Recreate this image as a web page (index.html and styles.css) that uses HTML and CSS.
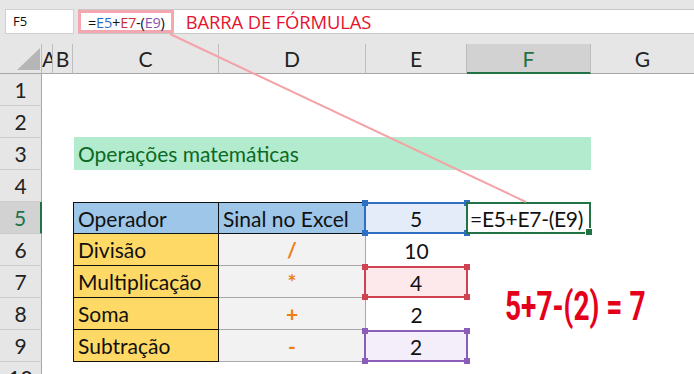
FILE: index.html
```html
<!DOCTYPE html>
<html>

<head>
    <meta charset="utf-8">
    <meta name="viewport" content="width=device-width, initial-scale=1.0">
    <title>Operações matemáticas</title>
    <link rel="stylesheet" href="styles.css">
</head>

<body>
    <div class="app">
        <header class="formula-bar">
            <div class="name-box">F5</div>
            <div class="formula-input">
                <span class="formula-box">=<span class="ref-blue">E5</span>+<span class="ref-red">E7</span>-(<span class="ref-purple">E9</span>)</span>
                <span class="formula-label">BARRA DE FÓRMULAS</span>
            </div>
        </header>

        <main class="sheet">
            <!-- column headers -->
            <div class="corner">
                <svg width="42" height="30" viewBox="0 0 42 30"><polygon points="17,26 40,26 40,4" fill="#b6b6b6" /></svg>
            </div>
            <div class="colhead col-a">A</div>
            <div class="colhead col-b">B</div>
            <div class="colhead col-c">C</div>
            <div class="colhead col-d">D</div>
            <div class="colhead col-e">E</div>
            <div class="colhead col-f selected">F</div>
            <div class="colhead col-g">G</div>

            <!-- row headers -->
            <div class="rowhead r1">1</div>
            <div class="rowhead r2">2</div>
            <div class="rowhead r3">3</div>
            <div class="rowhead r4">4</div>
            <div class="rowhead r5 selected">5</div>
            <div class="rowhead r6">6</div>
            <div class="rowhead r7">7</div>
            <div class="rowhead r8">8</div>
            <div class="rowhead r9">9</div>
            <div class="rowhead r10">10</div>

            <!-- title -->
            <div class="title r3">Operações matemáticas</div>

            <!-- operators table -->
            <div class="ops">
                <div class="op head">Operador</div>
                <div class="sign head">Sinal no Excel</div>
                <div class="op">Divisão</div>
                <div class="sign">/</div>
                <div class="op">Multiplicação</div>
                <div class="sign">*</div>
                <div class="op">Soma</div>
                <div class="sign">+</div>
                <div class="op">Subtração</div>
                <div class="sign">-</div>
            </div>

            <!-- values -->
            <div class="val col-e r5 ref blue">5<span class="h tl"></span><span class="h tr"></span><span class="h bl"></span><span class="h br"></span></div>
            <div class="val col-e r6">10</div>
            <div class="val col-e r7 ref red">4<span class="h tl"></span><span class="h tr"></span><span class="h bl"></span><span class="h br"></span></div>
            <div class="val col-e r8">2</div>
            <div class="val col-e r9 ref purple">2<span class="h tl"></span><span class="h tr"></span><span class="h bl"></span><span class="h br"></span></div>

            <div class="active col-f r5">=E5+E7-(E9)<span class="fill-handle"></span></div>

            <div class="result"><span>5+7-(2) = 7</span></div>
        </main>

        <svg class="callout" width="694" height="374" viewBox="0 0 694 374">
            <line x1="170" y1="34" x2="526" y2="202" stroke="#f4a3a6" stroke-width="2" />
        </svg>
    </div>
</body>

</html>
```

FILE: styles.css
```css
/* vars */
:root {
    --head-bg: #e6e6e6;
    --head-line: #bdbdbd;
    --sel-bg: #d2d2d2;
    --excel-green: #217346;
    --cell-font: Lato, "Open Sans", sans-serif;
}

html,
body {
    margin: 0;
    height: 100%;
    overflow: hidden;
    background: #fff;
}

.app {
    position: relative;
    width: 694px;
    height: 374px;
    font-family: var(--cell-font);
    color: #111;
}

/* formula bar */
.formula-bar {
    display: flex;
    align-items: stretch;
    height: 44px;
    padding: 9px 0 10px 0;
    box-sizing: border-box;
    background: var(--head-bg);
    gap: 4px;
}

.name-box {
    width: 69px;
    margin-left: 5px;
    background: #fff;
    border: 1px solid #d0d0d0;
    box-sizing: border-box;
    font-family: "Open Sans", sans-serif;
    font-size: 13px;
    line-height: 22px;
    padding-left: 7px;
}

.formula-input {
    flex: 1;
    display: flex;
    align-items: center;
    background: #fff;
    border-top: 1px solid #c8c8c8;
    border-bottom: 1px solid #c8c8c8;
    font-family: "Open Sans", sans-serif;
}

.formula-box {
    height: 100%;
    box-sizing: border-box;
    border: 3px solid #f2a8ae;
    padding: 0 6px 0 7px;
    font-size: 14.5px;
    line-height: 19px;
    margin-top: -1px;
    letter-spacing: -0.2px;
}

.ref-blue { color: #2e6bc4; }
.ref-red { color: #c4333f; }
.ref-purple { color: #8456ae; }

.formula-label {
    margin-left: 12px;
    color: #e4142e;
    font-size: 18.4px;
    letter-spacing: -0.1px;
}

/* sheet */
.sheet {
    display: grid;
    grid-template-columns: 42px 11px 20px 146px 147px 101px 124px 1fr;
    grid-template-rows: 30px repeat(10, 32px);
    height: 330px;
    overflow: hidden;
}

.corner {
    grid-column: 1;
    grid-row: 1;
    background: var(--head-bg);
    border-right: 1px solid var(--head-line);
    border-bottom: 1px solid #a6a6a6;
    box-sizing: border-box;
}

.corner svg { display: block; }

.colhead {
    grid-row: 1;
    background: var(--head-bg);
    border-right: 1px solid var(--head-line);
    border-bottom: 1px solid #a6a6a6;
    box-sizing: border-box;
    font-size: 21px;
    line-height: 30px;
    text-align: center;
    overflow: hidden;
    color: #222;
}

.colhead.col-a { text-align: left; }
.colhead.col-g { border-right: none; }

.colhead.selected {
    background: var(--sel-bg);
    color: var(--excel-green);
    border-bottom: 2px solid var(--excel-green);
    line-height: 29px;
}

.rowhead {
    grid-column: 1;
    background: var(--head-bg);
    border-right: 1px solid #a6a6a6;
    border-bottom: 1px solid #cdcdcd;
    box-sizing: border-box;
    font-size: 21px;
    line-height: 32px;
    text-align: center;
    color: #222;
}

.rowhead.selected {
    background: var(--sel-bg);
    color: var(--excel-green);
    border-right: 2px solid var(--excel-green);
}

.col-a { grid-column: 2; }
.col-b { grid-column: 3; }
.col-c { grid-column: 4; }
.col-d { grid-column: 5; }
.col-e { grid-column: 6; }
.col-f { grid-column: 7; }
.col-g { grid-column: 8; }

.r1 { grid-row: 2; }
.r2 { grid-row: 3; }
.r3 { grid-row: 4; }
.r4 { grid-row: 5; }
.r5 { grid-row: 6; }
.r6 { grid-row: 7; }
.r7 { grid-row: 8; }
.r8 { grid-row: 9; }
.r9 { grid-row: 10; }
.r10 { grid-row: 11; }

/* title band C3:F3 */
.title {
    grid-column: 4 / 8;
    margin: -1px 0 0 1px;
    background: #b3ebcf;
    color: #0b6a24;
    font-size: 21px;
    line-height: 33px;
    padding-left: 4px;
}

/* operators table C5:D9 */
.ops {
    grid-column: 4 / 6;
    grid-row: 6 / 11;
    display: grid;
    grid-template-columns: 146px 147px;
    grid-template-rows: repeat(5, 32px);
    font-size: 21px;
}

.op,
.sign {
    box-sizing: border-box;
    display: flex;
    align-items: center;
}

.op {
    background: #ffd966;
    border: 1px solid #111;
    border-top: none;
    padding-left: 4px;
}

.sign {
    justify-content: center;
    background: #f2f2f2;
    border-bottom: 1px solid #a8a8a8;
    border-right: 1px solid #a8a8a8;
    color: #f07c14;
    font-weight: bold;
}

.op.head,
.sign.head {
    background: #9dc6e9;
    border-top: 1px solid #111;
    border-bottom: 1px solid #111;
    font-weight: normal;
    color: #111;
}

.sign.head {
    justify-content: flex-start;
    padding-left: 4px;
    border-right: 1px solid #111;
}

/* value column E */
.val {
    position: relative;
    display: flex;
    align-items: center;
    justify-content: center;
    font-size: 21px;
}

.ref {
    margin: 0 -1px 0 -2px;
    border: 2px solid;
}

.ref.blue { border-color: #2f6fc2; background: #e3ecf8; }
.ref.red { border-color: #cf4250; background: #fde9ec; }
.ref.purple { border-color: #8b5db8; background: #f3eefa; }

.h {
    position: absolute;
    width: 6px;
    height: 6px;
}

.ref.blue .h { background: #2f6fc2; }
.ref.red .h { background: #cf4250; }
.ref.purple .h { background: #8b5db8; }

.h.tl { left: -4px; top: -4px; }
.h.tr { right: -4px; top: -4px; }
.h.bl { left: -4px; bottom: -4px; }
.h.br { right: -4px; bottom: -4px; }

/* active cell F5 */
.active {
    position: relative;
    border: 2px solid var(--excel-green);
    margin: 0 0 0 -1px;
    font-size: 21px;
    display: flex;
    align-items: center;
    padding-left: 2px;
    background: #fff;
    white-space: nowrap;
    letter-spacing: -0.3px;
}

.fill-handle {
    position: absolute;
    right: -4px;
    bottom: -4px;
    width: 6px;
    height: 6px;
    background: var(--excel-green);
    border: 1px solid #fff;
}

/* result note */
.result {
    grid-column: 7 / 9;
    grid-row: 8 / 10;
    padding: 20px 0 0 38px;
}

.result span {
    display: inline-block;
    font-family: Roboto, sans-serif;
    font-weight: bold;
    font-size: 41px;
    line-height: 41px;
    color: #e4001b;
    transform: scaleX(0.685);
    transform-origin: left center;
    white-space: nowrap;
}

/* callout line from formula bar */
.callout {
    position: absolute;
    left: 0;
    top: 0;
    pointer-events: none;
}
```
